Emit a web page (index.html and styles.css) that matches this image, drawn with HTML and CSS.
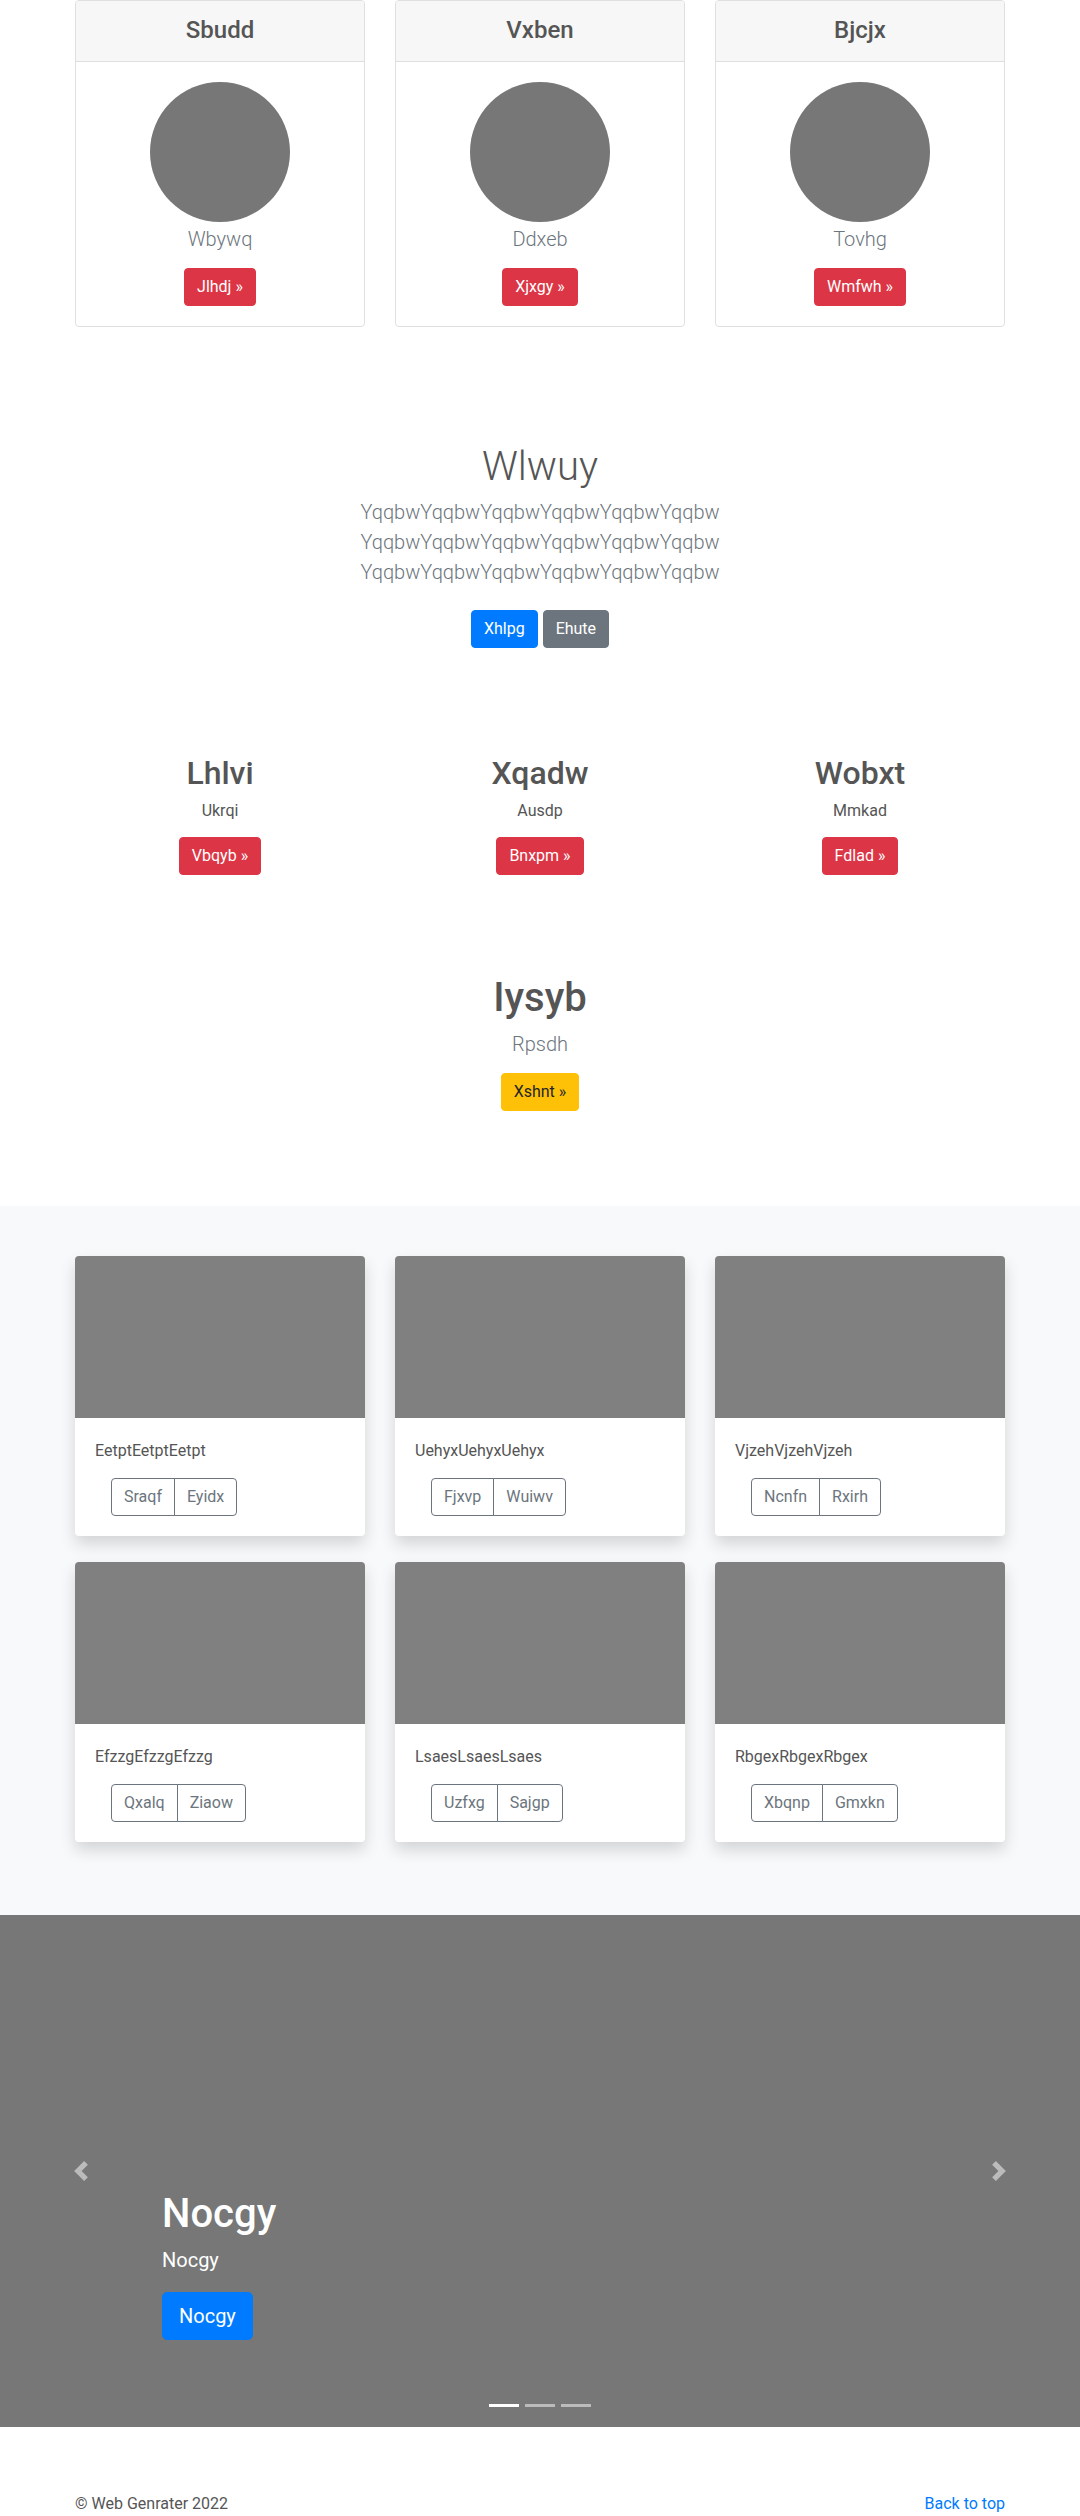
FILE: index.html
```html
<!DOCTYPE html>
<html lang="en">
<head>
<meta charset="utf-8">
<title>Web Genrater</title>
<link rel="stylesheet" href="styles.css">
</head>
<body>
<main>
  <section class="container pricing">
    <div class="pcard">
      <div class="pcard-header"><h4>Sbudd</h4></div>
      <div class="pcard-body">
        <div class="avatar"></div>
        <p class="lead muted">Wbywq</p>
        <a class="btn btn-danger" href="#">Jlhdj &raquo;</a>
      </div>
    </div>
    <div class="pcard">
      <div class="pcard-header"><h4>Vxben</h4></div>
      <div class="pcard-body">
        <div class="avatar"></div>
        <p class="lead muted">Ddxeb</p>
        <a class="btn btn-danger" href="#">Xjxgy &raquo;</a>
      </div>
    </div>
    <div class="pcard">
      <div class="pcard-header"><h4>Bjcjx</h4></div>
      <div class="pcard-body">
        <div class="avatar"></div>
        <p class="lead muted">Tovhg</p>
        <a class="btn btn-danger" href="#">Wmfwh &raquo;</a>
      </div>
    </div>
  </section>

  <section class="container intro">
    <h1 class="intro-title">Wlwuy</h1>
    <p class="lead muted intro-text">YqqbwYqqbwYqqbwYqqbwYqqbwYqqbw YqqbwYqqbwYqqbwYqqbwYqqbwYqqbw YqqbwYqqbwYqqbwYqqbwYqqbwYqqbw</p>
    <div class="intro-actions">
      <a class="btn btn-primary" href="#">Xhlpg</a>
      <a class="btn btn-secondary" href="#">Ehute</a>
    </div>
  </section>

  <section class="container features">
    <div class="feature">
      <h2>Lhlvi</h2>
      <p>Ukrqi</p>
      <a class="btn btn-danger" href="#">Vbqyb &raquo;</a>
    </div>
    <div class="feature">
      <h2>Xqadw</h2>
      <p>Ausdp</p>
      <a class="btn btn-danger" href="#">Bnxpm &raquo;</a>
    </div>
    <div class="feature">
      <h2>Wobxt</h2>
      <p>Mmkad</p>
      <a class="btn btn-danger" href="#">Fdlad &raquo;</a>
    </div>
  </section>

  <section class="container highlight">
    <h1 class="highlight-title">Iysyb</h1>
    <p class="lead muted">Rpsdh</p>
    <a class="btn btn-warning" href="#">Xshnt &raquo;</a>
  </section>

  <section class="album">
    <div class="container album-grid">
      <div class="acard">
        <div class="acard-img"></div>
        <div class="acard-body">
          <p>EetptEetptEetpt</p>
          <div class="btn-group"><a class="btn btn-outline" href="#">Sraqf</a><a class="btn btn-outline" href="#">Eyidx</a></div>
        </div>
      </div>
      <div class="acard">
        <div class="acard-img"></div>
        <div class="acard-body">
          <p>UehyxUehyxUehyx</p>
          <div class="btn-group"><a class="btn btn-outline" href="#">Fjxvp</a><a class="btn btn-outline" href="#">Wuiwv</a></div>
        </div>
      </div>
      <div class="acard">
        <div class="acard-img"></div>
        <div class="acard-body">
          <p>VjzehVjzehVjzeh</p>
          <div class="btn-group"><a class="btn btn-outline" href="#">Ncnfn</a><a class="btn btn-outline" href="#">Rxirh</a></div>
        </div>
      </div>
      <div class="acard">
        <div class="acard-img"></div>
        <div class="acard-body">
          <p>EfzzgEfzzgEfzzg</p>
          <div class="btn-group"><a class="btn btn-outline" href="#">Qxalq</a><a class="btn btn-outline" href="#">Ziaow</a></div>
        </div>
      </div>
      <div class="acard">
        <div class="acard-img"></div>
        <div class="acard-body">
          <p>LsaesLsaesLsaes</p>
          <div class="btn-group"><a class="btn btn-outline" href="#">Uzfxg</a><a class="btn btn-outline" href="#">Sajgp</a></div>
        </div>
      </div>
      <div class="acard">
        <div class="acard-img"></div>
        <div class="acard-body">
          <p>RbgexRbgexRbgex</p>
          <div class="btn-group"><a class="btn btn-outline" href="#">Xbqnp</a><a class="btn btn-outline" href="#">Gmxkn</a></div>
        </div>
      </div>
    </div>
  </section>

  <section class="carousel">
    <a class="carousel-control prev" href="#">
      <svg width="20" height="20" viewBox="0 0 8 8"><path fill="#fff" d="M5.25 0l-4 4 4 4 1.5-1.5L4.25 4l2.5-2.5L5.25 0z"/></svg>
    </a>
    <div class="carousel-caption">
      <h1>Nocgy</h1>
      <p>Nocgy</p>
      <a class="btn btn-primary btn-lg" href="#">Nocgy</a>
    </div>
    <a class="carousel-control next" href="#">
      <svg width="20" height="20" viewBox="0 0 8 8"><path fill="#fff" d="M2.75 0l-1.5 1.5L3.75 4l-2.5 2.5L2.75 8l4-4-4-4z"/></svg>
    </a>
    <ol class="carousel-indicators">
      <li class="active"></li>
      <li></li>
      <li></li>
    </ol>
  </section>
</main>

<footer class="container footer">
  <p>&copy; Web Genrater 2022</p>
  <p><a href="#">Back to top</a></p>
</footer>
</body>
</html>
```

FILE: styles.css
```css
* { box-sizing: border-box; }

body {
  margin: 0;
  font-family: Roboto, "Noto Sans", "Liberation Sans", sans-serif;
  font-size: 16px;
  line-height: 1.5;
  color: #555;
  background: #fff;
}

h1, h2, h4, p { margin: 0; }

a { color: #007bff; text-decoration: none; }

.container {
  width: 930px;
  margin-left: auto;
  margin-right: auto;
}

.muted { color: #6c757d; }

.lead {
  font-size: 20px;
  font-weight: 300;
  line-height: 30px;
}

/* Buttons */
.btn {
  display: inline-block;
  padding: 6px 12px;
  font-size: 16px;
  line-height: 24px;
  font-weight: 400;
  border: 1px solid transparent;
  border-radius: 4px;
  color: #fff;
  text-align: center;
  vertical-align: middle;
}
.btn-danger { background: #dc3545; border-color: #dc3545; }
.btn-primary { background: #007bff; border-color: #007bff; }
.btn-secondary { background: #6c757d; border-color: #6c757d; }
.btn-warning { background: #ffc107; border-color: #ffc107; color: #212529; }
.btn-lg {
  padding: 8px 16px;
  font-size: 20px;
  line-height: 30px;
  border-radius: 5px;
}
.btn-outline {
  color: #6c757d;
  border-color: #6c757d;
  background: transparent;
}

/* Pricing cards */
.pricing {
  display: grid;
  grid-template-columns: repeat(3, 1fr);
  column-gap: 30px;
}
.pcard {
  border: 1px solid #dfdfdf;
  border-radius: 4px;
  text-align: center;
  background: #fff;
}
.pcard-header {
  background: #f7f7f7;
  border-bottom: 1px solid #dfdfdf;
  padding: 11px 20px 13px;
  border-radius: 3px 3px 0 0;
}
.pcard-header h4 {
  font-size: 24px;
  font-weight: 500;
  line-height: 36px;
}
.pcard-body { padding: 20px; }
.avatar {
  width: 140px;
  height: 140px;
  border-radius: 50%;
  background: #777;
  margin: 0 auto;
}
.pcard-body .lead {
  padding-top: 2px;
  margin-bottom: 14px;
}

/* Intro */
.intro {
  margin-top: 114px;
  text-align: center;
}
.intro-title {
  font-size: 40px;
  font-weight: 300;
  line-height: 48px;
  padding-top: 2px;
  margin-bottom: 6px;
}
.intro-text {
  width: 450px;
  margin: 0 auto 23px;
}
.intro-actions {
  display: flex;
  justify-content: center;
  gap: 5px;
}

/* Features */
.features {
  margin-top: 103px;
  display: grid;
  grid-template-columns: repeat(3, 1fr);
  column-gap: 30px;
  text-align: center;
}
.feature h2 {
  font-size: 32px;
  font-weight: 500;
  line-height: 38px;
  padding-top: 3px;
  margin-bottom: 5px;
}
.feature p {
  padding-top: 2px;
  margin-bottom: 14px;
}

/* Highlight */
.highlight {
  margin-top: 96px;
  text-align: center;
}
.highlight-title {
  font-size: 40px;
  font-weight: 500;
  line-height: 48px;
  padding-top: 3px;
  margin-bottom: 5px;
}
.highlight .lead {
  padding-top: 2px;
  margin-bottom: 14px;
}

/* Album */
.album {
  margin-top: 95px;
  background: #f8f9fa;
  padding: 50px 0 73px;
}
.album-grid {
  display: grid;
  grid-template-columns: repeat(3, 1fr);
  column-gap: 30px;
  row-gap: 26px;
}
.acard {
  background: #fff;
  border-radius: 4px;
  overflow: hidden;
  box-shadow: 0 8px 16px rgba(0, 0, 0, 0.15);
}
.acard-img {
  height: 162px;
  background: #808080;
}
.acard-body { padding: 20px; }
.acard-body p {
  padding-top: 1px;
  margin-bottom: 15px;
}
.btn-group {
  display: inline-flex;
  margin-left: 16px;
}
.btn-group .btn:first-child {
  border-top-right-radius: 0;
  border-bottom-right-radius: 0;
}
.btn-group .btn:last-child {
  margin-left: -1px;
  border-top-left-radius: 0;
  border-bottom-left-radius: 0;
}

/* Carousel */
.carousel {
  position: relative;
  height: 512px;
  background: #777;
  margin-bottom: 64px;
}
.carousel-control {
  position: absolute;
  top: 0;
  bottom: 0;
  width: 15%;
  display: flex;
  align-items: center;
  justify-content: center;
  opacity: 0.5;
}
.carousel-control svg { display: block; }
.carousel-control.prev { left: 0; }
.carousel-control.next { right: 0; }
.carousel-caption {
  position: absolute;
  left: 15%;
  right: 15%;
  bottom: 87px;
  color: #fff;
  z-index: 2;
}
.carousel-caption h1 {
  font-size: 40px;
  font-weight: 500;
  line-height: 48px;
  padding-top: 3px;
  margin-bottom: 5px;
}
.carousel-caption p {
  font-size: 20px;
  line-height: 30px;
  padding-top: 2px;
  margin-bottom: 17px;
}
.carousel-indicators {
  position: absolute;
  left: 0;
  right: 0;
  bottom: 10px;
  margin: 0;
  padding: 0;
  list-style: none;
  display: flex;
  justify-content: center;
}
.carousel-indicators li {
  width: 30px;
  height: 23px;
  margin: 0 3px;
  border-top: 10px solid transparent;
  border-bottom: 10px solid transparent;
  background: #fff;
  background-clip: padding-box;
  opacity: 0.5;
}
.carousel-indicators li.active { opacity: 1; }

/* Footer */
.footer {
  display: flex;
  justify-content: space-between;
}
.footer p {
  padding-top: 1px;
  margin-bottom: 15px;
}
```
